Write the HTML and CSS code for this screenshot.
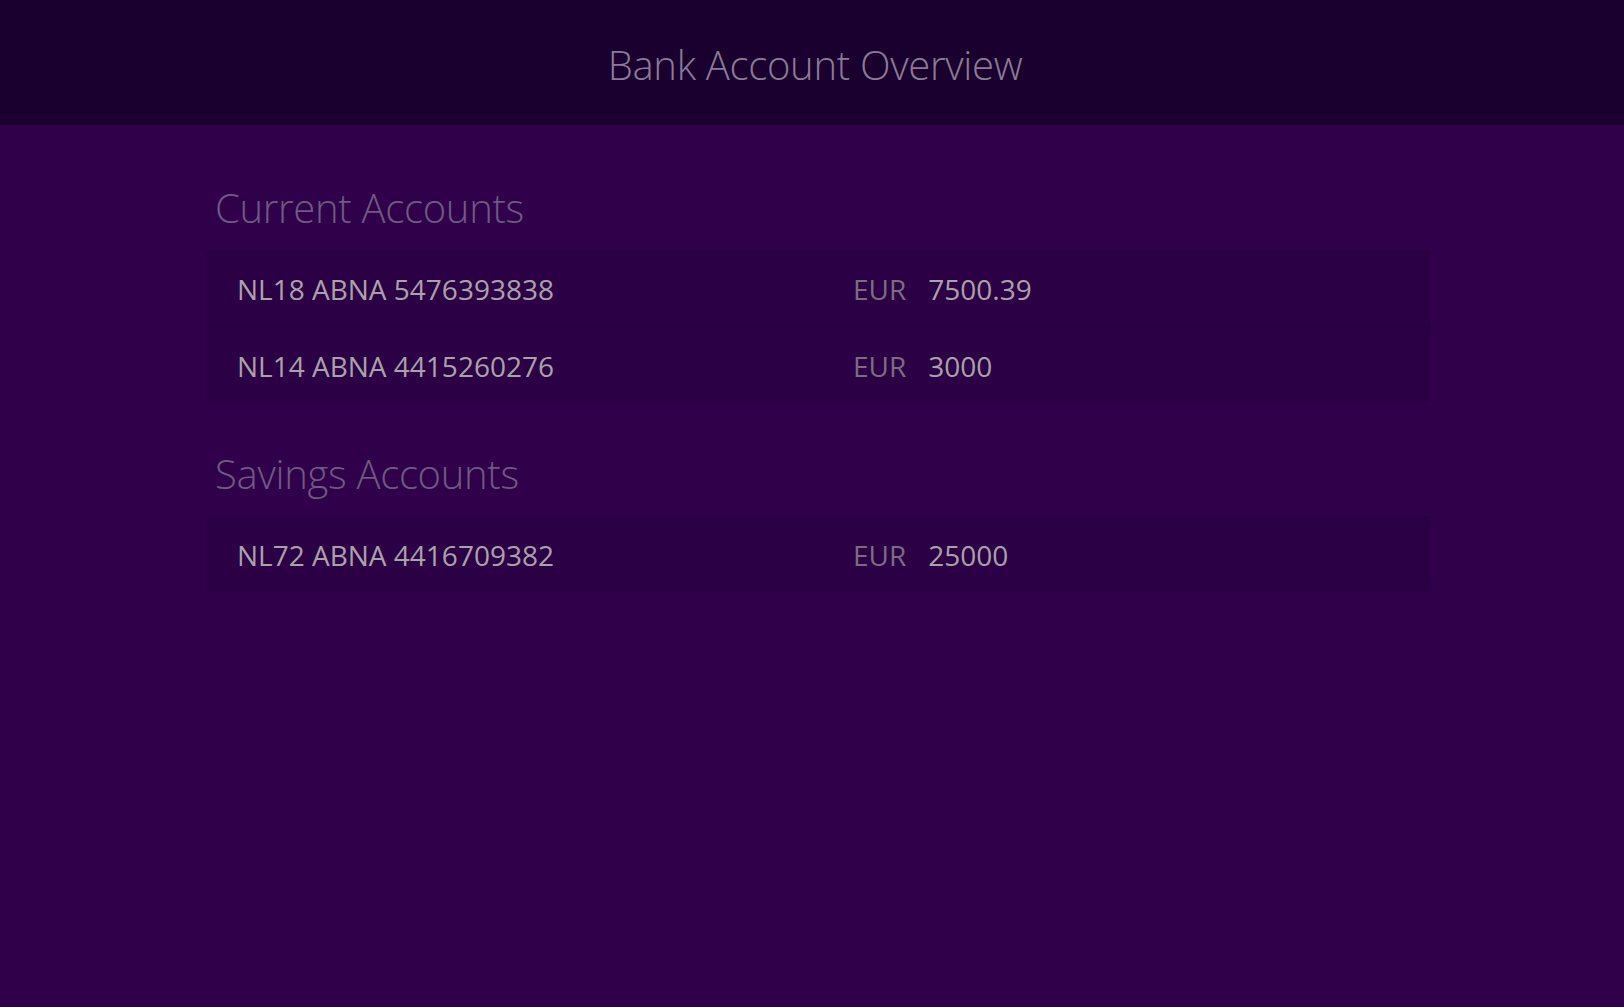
FILE: index.html
```html
<!DOCTYPE html>
<html lang="en">
<head>
<meta charset="utf-8">
<title>Bank Account Overview</title>
<link rel="stylesheet" href="styles.css">
</head>
<body>
<header class="topbar">
  <h1 class="title">Bank Account Overview</h1>
</header>
<main class="content">
  <section class="group">
    <h2 class="group-title">Current Accounts</h2>
    <div class="list">
      <div class="row">
        <span class="iban">NL18 ABNA 5476393838</span>
        <span class="cur">EUR</span>
        <span class="amount">7500.39</span>
      </div>
      <div class="row">
        <span class="iban">NL14 ABNA 4415260276</span>
        <span class="cur">EUR</span>
        <span class="amount">3000</span>
      </div>
    </div>
  </section>
  <section class="group">
    <h2 class="group-title">Savings Accounts</h2>
    <div class="list">
      <div class="row">
        <span class="iban">NL72 ABNA 4416709382</span>
        <span class="cur">EUR</span>
        <span class="amount">25000</span>
      </div>
    </div>
  </section>
</main>
</body>
</html>
```
FILE: styles.css
```css
html, body {
  margin: 0;
  padding: 0;
}
body {
  background: #31004a;
  font-family: "Open Sans", "Noto Sans", "DejaVu Sans", sans-serif;
  min-height: 1007px;
}
.topbar {
  height: 125px;
  background: #1a002f;
  display: flex;
  justify-content: center;
  box-sizing: border-box;
  padding-top: 41px;
}
.title {
  margin: 0 0 0 6px;
  font-size: 40px;
  line-height: 48px;
  font-weight: 300;
  letter-spacing: -0.3px;
  color: #8b7b96;
}
.content {
  padding: 59px 194px 0 207px;
}
.group {
  margin-bottom: 48px;
}
.group-title {
  margin: 0 0 18px 8px;
  font-size: 40px;
  line-height: 48px;
  font-weight: 300;
  letter-spacing: -0.3px;
  color: #6e5a82;
}
.list {
  border-radius: 4px;
  overflow: hidden;
}
.row {
  display: grid;
  grid-template-columns: 594px auto 1fr;
  column-gap: 22px;
  align-items: baseline;
  height: 76px;
  line-height: 74px;
  padding: 2px 0 0 30px;
  box-sizing: border-box;
  background: #2c0044;
  box-shadow: inset 0 0 0 1px rgba(40, 0, 62, 0.6);
  font-size: 28px;
}
.row + .row {
  border-top: 1px solid #2a0042;
}
.iban {
  color: #aaa2ab;
}
.cur {
  color: #7a6c83;
}
.amount {
  color: #aaa2ab;
}
```
